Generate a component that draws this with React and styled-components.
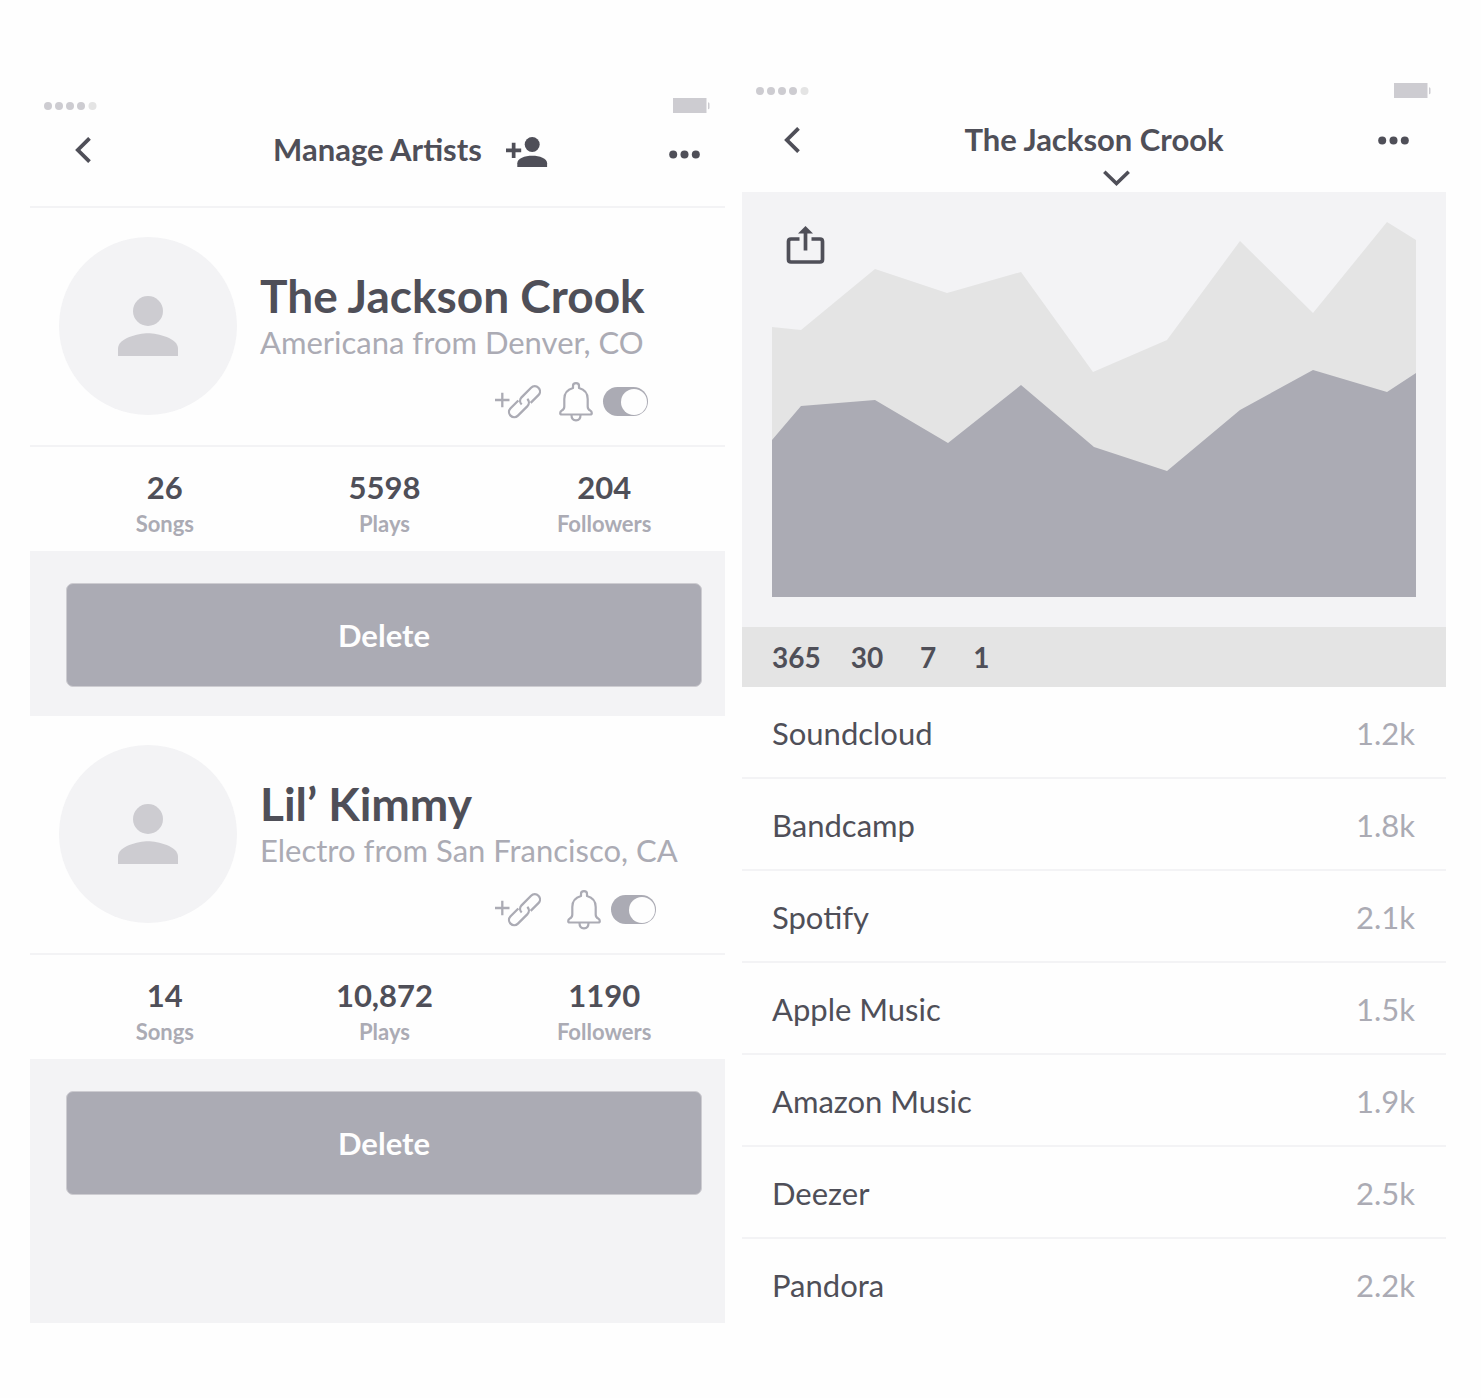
import React from "react";
import styled, { createGlobalStyle } from "styled-components";

const c = {
  dark: "#4f4f58",
  mid: "#ababb4",
  soft: "#cdccd1",
  pale: "#f3f3f5",
  fill: "#e4e4e4",
  page: "#fefefe",
};

const Global = createGlobalStyle`
  *, *::before, *::after { box-sizing: border-box; }
  body { margin: 0; background: ${c.page}; color: ${c.dark}; font-family: Lato, Carlito, "Open Sans", sans-serif; }
  h1, h2, p, dl, dd { margin: 0; font-weight: inherit; }
  svg { display: block; }
`;

const Page = styled.main`
  display: grid;
  grid-template-columns: 695fr 704fr;
  gap: 17px;
  align-items: start;
  padding: 83px 35px 67px 30px;
`;

const Screen = styled.section`
  min-width: 0;
  padding-top: ${(p) => p.$inset || 0}px;
`;

const StatusBar = styled.div`
  display: flex;
  justify-content: space-between;
  align-items: center;
  height: 15px;
  padding: 0 15px 0 14px;
`;

const IconButton = styled.button`
  display: flex;
  align-items: center;
  justify-content: center;
  flex: none;
  height: ${(p) => p.$h || 26}px;
  padding: 0;
  border: 0;
  background: none;
  color: inherit;
  cursor: pointer;
`;

const Header = styled.header`
  padding: ${(p) => p.$pad};
  border-bottom: ${(p) => (p.$line ? `2px solid ${c.pale}` : "0")};
`;

const HeaderRow = styled.div`
  display: grid;
  grid-template-columns: 1fr auto 1fr;
  align-items: center;
`;

const Title = styled.h1`
  padding-bottom: 2px;
  font-size: 31px;
  line-height: 34px;
  font-weight: 700;
`;

const HeaderStart = styled.div`
  display: flex;
  padding-left: ${(p) => p.$indent}px;
`;

const HeaderEnd = styled.div`
  display: flex;
  align-items: flex-end;
  justify-content: ${(p) => (p.$split ? "space-between" : "flex-end")};
  padding: ${(p) => (p.$split ? "4px 0 0 24px" : "0")};
`;

const Dropdown = styled.div`
  display: flex;
  justify-content: center;
  padding: 12px 0 0 44px;
`;

const Profile = styled.div`
  display: flex;
  gap: 23px;
  padding: 29px;
  border-bottom: 2px solid ${c.pale};
`;

const Avatar = styled.div`
  display: flex;
  align-items: center;
  justify-content: center;
  flex: none;
  width: 178px;
  height: 178px;
  border-radius: 50%;
  background: ${c.pale};
  color: ${c.soft};
`;

const Info = styled.div`
  display: flex;
  flex-direction: column;
  align-items: flex-start;
  padding-top: 31px;
`;

const Name = styled.h2`
  font-size: 46px;
  line-height: 55px;
  font-weight: 700;
  white-space: nowrap;
`;

const Origin = styled.p`
  font-size: 31px;
  line-height: 38px;
  color: ${c.mid};
  white-space: nowrap;
`;

const Actions = styled.div`
  display: flex;
  align-items: center;
  margin-top: 26px;
  padding-left: 235px;
  gap: 10px;
  color: ${c.mid};
`;

const LinkButton = styled(IconButton)`
  margin-right: ${(p) => p.$after}px;
`;

const Toggle = styled.input`
  appearance: none;
  display: flex;
  align-items: center;
  justify-content: flex-end;
  width: 45px;
  height: 29px;
  margin: 0;
  padding: 1px;
  border-radius: 15px;
  background: ${c.mid};
  cursor: pointer;
  &::before {
    content: "";
    width: 26px;
    height: 26px;
    border-radius: 50%;
    background: ${c.page};
  }
  &:not(:checked) { justify-content: flex-start; }
`;

const Stats = styled.dl`
  display: grid;
  grid-template-columns: repeat(3, 1fr);
  padding: 22px 11px 11px 25px;
`;

const Stat = styled.div`
  display: flex;
  flex-direction: column-reverse;
  align-items: center;
  gap: 3px;
`;

const StatValue = styled.dd`
  font-size: 31px;
  line-height: 36px;
  font-weight: 700;
`;

const StatLabel = styled.dt`
  font-size: 22px;
  line-height: 32px;
  font-weight: 700;
  color: ${c.mid};
`;

const Footer = styled.div`
  padding: 32px 23px ${(p) => (p.$last ? 128 : 29)}px 36px;
  background: ${c.pale};
`;

const DeleteButton = styled.button`
  display: block;
  width: 100%;
  height: 104px;
  border: 1px solid ${c.soft};
  border-radius: 7px;
  background: ${c.mid};
  color: ${c.page};
  font: 700 31px/36px Lato, Carlito, "Open Sans", sans-serif;
  cursor: pointer;
`;

const ChartPanel = styled.div`
  position: relative;
  padding: 30px;
  background: ${c.pale};
  > svg { width: 100%; }
`;

const Share = styled(IconButton)`
  position: absolute;
  left: 44px;
  top: 34px;
`;

const Ranges = styled.div`
  display: flex;
  align-items: center;
  height: 60px;
  gap: 30px;
  padding: 0 30px;
  background: ${c.fill};
`;

const Range = styled.button`
  min-width: ${(p) => p.$min || 0}px;
  padding: 0;
  border: 0;
  background: none;
  color: inherit;
  font: 700 28px/36px Lato, Carlito, "Open Sans", sans-serif;
  cursor: pointer;
`;

const Sources = styled.table`
  width: 100%;
  border-spacing: 0;
  font-size: 31px;
  line-height: 36px;
`;

const Source = styled.tr`
  > * {
    height: 92px;
    padding: 2px 31px 0 30px;
    border-bottom: 2px solid ${c.pale};
    font-weight: 400;
    text-align: left;
  }
  > td { color: ${c.mid}; text-align: right; }
  &:last-child > * { border-bottom-color: transparent; }
`;

const Signal = () => (
  <svg width="54" height="10" viewBox="0 0 54 10" fill={c.soft} aria-hidden="true">
    {[4, 15, 26, 37].map((x) => <circle key={x} cx={x} cy="5" r="4" />)}
    <circle cx="48.5" cy="5" r="4" fill={c.fill} />
  </svg>
);

const Battery = () => (
  <svg width="38" height="15" viewBox="0 0 38 15" fill={c.soft} aria-hidden="true">
    <path d="M1 0h33.500v15H1zM36 4.200q1.500 0 1.500 1.500v4q0 1.500-1.500 1.500z" />
  </svg>
);

const Back = () => (
  <svg width="16" height="26" viewBox="0 0 16 26" fill="none" stroke="currentColor" strokeWidth="3.800" aria-hidden="true">
    <path d="M14.500 1.300 2.800 13l11.700 11.700" />
  </svg>
);

const More = () => (
  <svg width="31" height="9" viewBox="0 0 31 9" fill="currentColor" aria-hidden="true">
    <circle cx="4.200" cy="4.500" r="4" />
    <circle cx="15.500" cy="4.500" r="4" />
    <circle cx="26.800" cy="4.500" r="4" />
  </svg>
);

const AddPerson = () => (
  <svg width="42" height="30" viewBox="0 0 42 30" fill="currentColor" aria-hidden="true">
    <path d="M5.800 5.800h3.700v5.700h5.700v3.700H9.500v5.700H5.800v-5.700H0v-3.700h5.800z" />
    <circle cx="26.200" cy="7.500" r="7.500" />
    <path d="M11.300 30v-3.700c0-5 7.400-7.600 14.900-7.600s14.900 2.600 14.900 7.600V30z" />
  </svg>
);

const Person = () => (
  <svg width="60" height="60" viewBox="0 0 60 60" fill="currentColor" aria-hidden="true">
    <circle cx="30" cy="15" r="15" />
    <path d="M0 60v-7.500c0-10 20-15.200 30-15.200s30 5.200 30 15.200V60z" />
  </svg>
);

const AddLink = () => (
  <svg width="46" height="34" viewBox="0 0 46 34" fill="none" stroke="currentColor" strokeWidth="2.300" aria-hidden="true">
    <path d="M0 15h14.500M7.300 7.700v14.600" />
    <g transform="translate(29.500 16.700) rotate(-45)">
      <path d="M3.500 5.200H14.500a5.200 5.200 0 0 0 0-10.400H1a5.200 5.200 0 0 0-5 5.200" />
      <path d="M-3.500-5.200H-14.500a5.200 5.200 0 0 0 0 10.400H-1a5.200 5.200 0 0 0 5-5.200" />
    </g>
  </svg>
);

const Bell = () => (
  <svg width="34" height="40" viewBox="0 0 34 40" fill="none" stroke="currentColor" strokeWidth="2.200" strokeLinejoin="round" aria-hidden="true">
    <path d="M14 6V3.800C14 2.200 15.200 1.200 17 1.200s3 1 3 2.600V6c5.500 1.500 8.700 5.500 8.700 11v7.500c0 2 .8 3.200 2.500 4 1 .5 1.600 1.300 1.600 2.500 0 1-.6 1.500-1.600 1.500H2.800c-1 0-1.600-.5-1.600-1.500 0-1.200.6-2 1.600-2.500 1.700-.8 2.500-2 2.500-4V17c0-5.500 3.200-9.500 8.700-11z" />
    <path d="M12.500 33c0 3.300 1.800 5.300 4.500 5.300s4.500-2 4.500-5.300" />
  </svg>
);

const Down = () => (
  <svg width="27" height="17" viewBox="0 0 27 17" fill="none" stroke="currentColor" strokeWidth="3.600" aria-hidden="true">
    <path d="M1.300 1.800 13.500 13.500 25.700 1.800" />
  </svg>
);

const ShareIcon = () => (
  <svg width="39" height="38" viewBox="0 0 39 38" fill="none" stroke="currentColor" strokeWidth="3.700" aria-hidden="true">
    <path d="M13.500 13H5q-2.500 0-2.500 2.500v18Q2.500 36 5 36h29q2.500 0 2.500-2.500v-18Q36.500 13 34 13h-8.500" />
    <path d="M19.500 24.500V5" />
    <path d="M19.500 0 27 7.500H12z" fill="currentColor" stroke="none" />
  </svg>
);

const Chart = () => (
  <svg height="375" viewBox="0 0 644 375" preserveAspectRatio="none" role="img" aria-label="Plays over time">
    <path fill={c.fill} d="M0 105 29 108 103 47 175 71 249 50 321 150 395 118 468 19 541 91 615 0 644 18V375H0z" />
    <path fill={c.mid} d="M0 218 29 184 103 178 176 221 249 163 322 225 395 249 468 188 541 148 615 170 644 151V375H0z" />
  </svg>
);

const artists = [
  { name: "The Jackson Crook", origin: "Americana from Denver, CO", after: 8, stats: [["Songs", "26"], ["Plays", "5598"], ["Followers", "204"]] },
  { name: "Lil’ Kimmy", origin: "Electro from San Francisco, CA", after: 16, stats: [["Songs", "14"], ["Plays", "10,872"], ["Followers", "1190"]] },
];

const sources = [
  ["Soundcloud", "1.2k"],
  ["Bandcamp", "1.8k"],
  ["Spotify", "2.1k"],
  ["Apple Music", "1.5k"],
  ["Amazon Music", "1.9k"],
  ["Deezer", "2.5k"],
  ["Pandora", "2.2k"],
];

function Artist({ artist, last }) {
  return (
    <article>
      <Profile>
        <Avatar><Person /></Avatar>
        <Info>
          <Name>{artist.name}</Name>
          <Origin>{artist.origin}</Origin>
          <Actions>
            <LinkButton $h={29} $after={artist.after} aria-label="Add link"><AddLink /></LinkButton>
            <IconButton $h={29} aria-label="Notifications"><Bell /></IconButton>
            <Toggle type="checkbox" defaultChecked aria-label="Active" />
          </Actions>
        </Info>
      </Profile>
      <Stats>
        {artist.stats.map(([label, value]) => (
          <Stat key={label}>
            <StatLabel>{label}</StatLabel>
            <StatValue>{value}</StatValue>
          </Stat>
        ))}
      </Stats>
      <Footer $last={last}>
        <DeleteButton>Delete</DeleteButton>
      </Footer>
    </article>
  );
}

export default function App() {
  return (
    <>
      <Global />
      <Page>
        <Screen $inset={15}>
          <StatusBar><Signal /><Battery /></StatusBar>
          <Header $line $pad="19px 25px 38px">
            <HeaderRow>
              <HeaderStart $indent={20}><IconButton aria-label="Back"><Back /></IconButton></HeaderStart>
              <Title>Manage Artists</Title>
              <HeaderEnd $split>
                <IconButton $h={30} aria-label="Add artist"><AddPerson /></IconButton>
                <IconButton aria-label="More"><More /></IconButton>
              </HeaderEnd>
            </HeaderRow>
          </Header>
          {artists.map((a, i) => (
            <Artist key={a.name} artist={a} last={i === artists.length - 1} />
          ))}
        </Screen>
        <Screen>
          <StatusBar><Signal /><Battery /></StatusBar>
          <Header $pad="24px 37px 5px">
            <HeaderRow>
              <HeaderStart $indent={5}><IconButton aria-label="Back"><Back /></IconButton></HeaderStart>
              <Title>The Jackson Crook</Title>
              <HeaderEnd><IconButton aria-label="More"><More /></IconButton></HeaderEnd>
            </HeaderRow>
            <Dropdown><IconButton $h={17} aria-label="Choose artist"><Down /></IconButton></Dropdown>
          </Header>
          <ChartPanel>
            <Chart />
            <Share $h={38} aria-label="Share"><ShareIcon /></Share>
          </ChartPanel>
          <Ranges>
            <Range>365</Range>
            <Range>30</Range>
            <Range $min={30}>7</Range>
            <Range>1</Range>
          </Ranges>
          <Sources>
            <tbody>
              {sources.map(([name, count]) => (
                <Source key={name}><th scope="row">{name}</th><td>{count}</td></Source>
              ))}
            </tbody>
          </Sources>
        </Screen>
      </Page>
    </>
  );
}
